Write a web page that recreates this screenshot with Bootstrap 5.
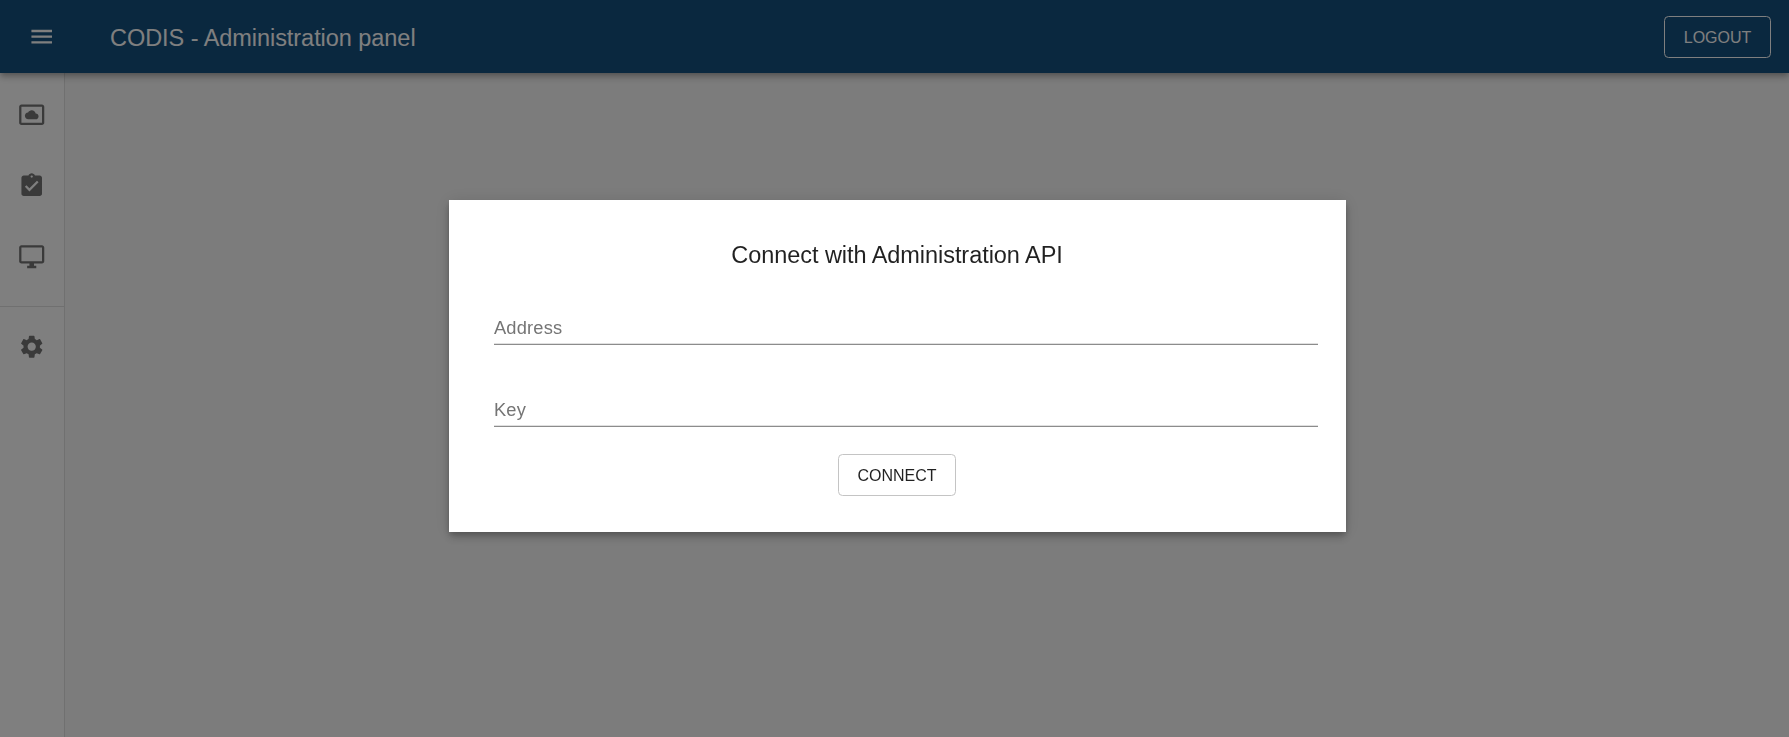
<!DOCTYPE html>
<html lang="en">
<head>
<meta charset="utf-8">
<meta name="viewport" content="width=device-width, initial-scale=1">
<title>CODIS - Administration panel</title>
<link href="https://cdn.jsdelivr.net/npm/bootstrap@5.3.0/dist/css/bootstrap.min.css" rel="stylesheet">
<style>
  body { font-family: "Liberation Sans", Arial, sans-serif; background: #f8f8f8; color: rgba(0,0,0,.87); }
  svg { display: block; fill: currentColor; width: 27.43px; height: 27.43px; }
  .topbar { height: 73px; padding: 0 18px 0 27.6px; background: #14507f; color: #fff; z-index: 2;
    box-shadow: 0 2px 5px -1px rgba(0,0,0,.2), 0 5px 6px rgba(0,0,0,.14), 0 1px 11px rgba(0,0,0,.12); }
  .brand-title { font-size: 23.5px; letter-spacing: -.05px; line-height: 38px; margin-left: 55px; padding-top: 2px; }
  .side-rail { width: 65px; background: #fff; border-right: 1px solid #e0e0e0; color: #757575; padding-top: 5.8px; }
  .side-rail a { height: 71px; }
  .side-rail .rail-split { border-top: 1px solid #e0e0e0; margin-top: 14.2px; padding-top: 4px; }
  .outline-btn { height: 42px; font-size: 16px; letter-spacing: -.04px; line-height: 1; padding: 1px 0 0; border-radius: 4.5px; }
  .logout-btn { width: 107px; color: #fff; border-color: #fff; padding-top: 2px; }
  .connect-btn { width: 118px; color: rgba(0,0,0,.87); border-color: #c4c4c4; margin-top: 27px; }
  .backdrop-dim { background: rgba(0,0,0,.5); padding-top: 200px; z-index: 10; }
  .connect-panel { width: 897px; height: 332px; margin-left: 5px; padding: 37px 28px 0 45px;
    box-shadow: 0 3px 6px -1px rgba(0,0,0,.2), 0 6px 9px rgba(0,0,0,.14), 0 1px 16px rgba(0,0,0,.12); }
  .connect-panel h1 { font-size: 23.5px; font-weight: 400; letter-spacing: -.05px; line-height: 37px; margin: 0 0 35px; }
  .line-field { height: 36px; font-size: 18.29px; letter-spacing: .00938em; padding: 2px 0 0 .5px; border-radius: 0;
    background: transparent; border: 0; box-shadow: inset 0 -1px #8c8c8c, inset 0 -2px #e0e0e0; }
  .line-field::placeholder { color: #757575; opacity: 1; }
  .line-field + .line-field { margin-top: 46px; }
  .connect-panel .shift { margin-left: -17px; }
</style>
</head>
<body class="vh-100 overflow-hidden d-flex flex-column">
  <header class="topbar d-flex align-items-center position-relative flex-shrink-0">
    <svg viewBox="0 0 24 24"><path d="M3 18h18v-2H3v2zm0-5h18v-2H3v2zm0-7v2h18V6H3z"/></svg>
    <div class="brand-title">CODIS - Administration panel</div>
    <button class="btn outline-btn logout-btn ms-auto" type="button">LOGOUT</button>
  </header>
  <div class="d-flex flex-grow-1">
    <nav class="side-rail d-flex flex-column">
      <a class="d-flex align-items-center justify-content-center text-reset"><svg viewBox="0 0 24 24"><path d="M9 16h6.5c1.38 0 2.5-1.12 2.5-2.5S16.88 11 15.5 11h-.05c-.24-1.69-1.69-3-3.45-3-1.4 0-2.6.83-3.16 2.02h-.16C7.17 10.18 6 11.45 6 13c0 1.66 1.34 3 3 3zM21 3H3c-1.1 0-2 .9-2 2v14c0 1.1.9 2 2 2h18c1.1 0 2-.9 2-2V5c0-1.1-.9-2-2-2zm0 16.01H3V4.99h18v14.02z"/></svg></a>
      <a class="d-flex align-items-center justify-content-center text-reset"><svg viewBox="0 0 24 24"><path d="M19 3h-4.18C14.4 1.84 13.3 1 12 1c-1.3 0-2.4.84-2.82 2H5c-1.1 0-2 .9-2 2v14c0 1.1.9 2 2 2h14c1.1 0 2-.9 2-2V5c0-1.1-.9-2-2-2zm-7 0c.55 0 1 .45 1 1s-.45 1-1 1-1-.45-1-1 .45-1 1-1zm-2 14l-4-4 1.41-1.41L10 14.17l6.59-6.59L18 9l-8 8z"/></svg></a>
      <a class="d-flex align-items-center justify-content-center text-reset"><svg viewBox="0 0 24 24"><path d="M21 2H3c-1.1 0-2 .9-2 2v12c0 1.1.9 2 2 2h7v2H8v2h8v-2h-2v-2h7c1.1 0 2-.9 2-2V4c0-1.1-.9-2-2-2zm0 14H3V4h18v12z"/></svg></a>
      <div class="rail-split">
        <a class="d-flex align-items-center justify-content-center text-reset"><svg viewBox="0 0 24 24"><path d="M19.14 12.94c.04-.3.06-.61.06-.94 0-.32-.02-.64-.07-.94l2.03-1.58c.18-.14.23-.41.12-.61l-1.92-3.32c-.12-.22-.37-.29-.59-.22l-2.39.96c-.5-.38-1.03-.7-1.62-.94l-.36-2.54c-.04-.24-.24-.41-.48-.41h-3.84c-.24 0-.43.17-.47.41l-.36 2.54c-.59.24-1.13.57-1.62.94l-2.39-.96c-.22-.08-.47 0-.59.22L2.74 8.87c-.12.21-.08.47.12.61l2.03 1.58c-.05.3-.09.63-.09.94s.02.64.07.94l-2.03 1.58c-.18.14-.23.41-.12.61l1.92 3.32c.12.22.37.29.59.22l2.39-.96c.5.38 1.03.7 1.62.94l.36 2.54c.05.24.24.41.48.41h3.84c.24 0 .44-.17.47-.41l.36-2.54c.59-.24 1.13-.56 1.62-.94l2.39.96c.22.08.47 0 .59-.22l1.92-3.32c.12-.22.07-.47-.12-.61l-2.01-1.58zM12 15.6c-1.98 0-3.6-1.62-3.6-3.6s1.62-3.6 3.6-3.6 3.6 1.62 3.6 3.6-1.62 3.6-3.6 3.6z"/></svg></a>
      </div>
    </nav>
    <main class="flex-grow-1"></main>
  </div>

  <div class="backdrop-dim position-fixed top-0 start-0 w-100 h-100 d-flex justify-content-center align-items-start">
    <form class="connect-panel bg-white d-flex flex-column">
      <h1 class="text-center shift">Connect with Administration API</h1>
      <input class="form-control line-field" type="text" placeholder="Address">
      <input class="form-control line-field" type="text" placeholder="Key">
      <div class="text-center shift"><button class="btn outline-btn connect-btn" type="button">CONNECT</button></div>
    </form>
  </div>
<script src="https://cdn.jsdelivr.net/npm/bootstrap@5.3.0/dist/js/bootstrap.bundle.min.js"></script>
</body>
</html>
